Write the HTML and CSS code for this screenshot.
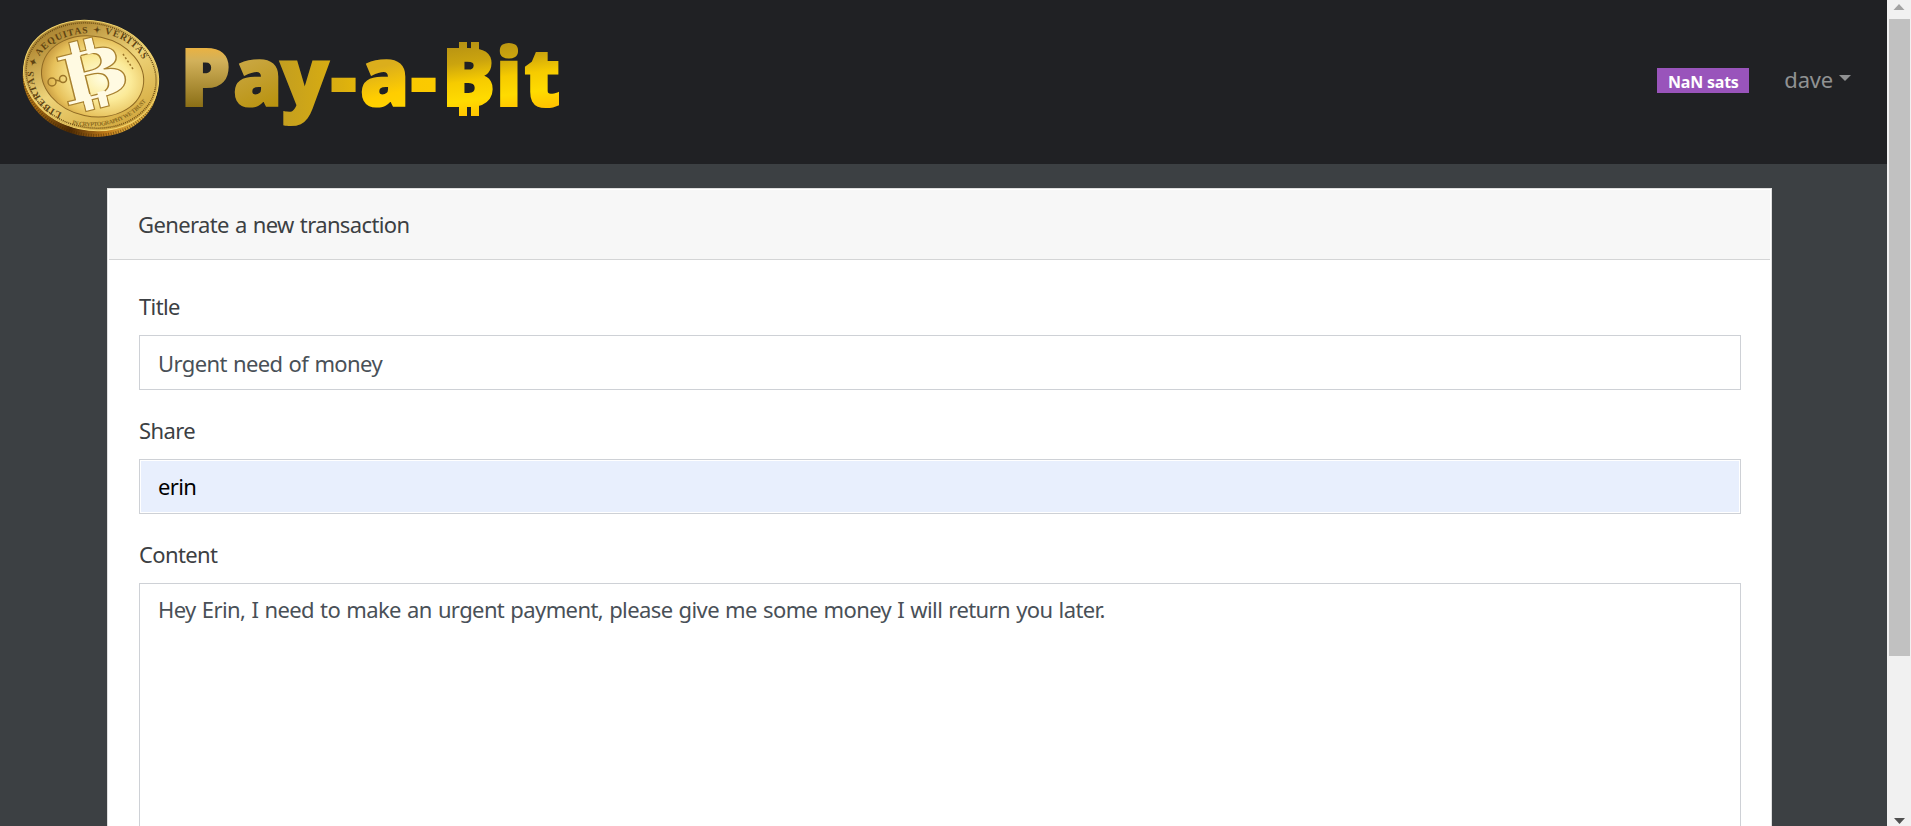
FILE: index.html
```
<!DOCTYPE html>
<html lang="en">
<head>
<meta charset="utf-8">
<title>Pay-a-Bit</title>
<link rel="stylesheet" href="styles.css">
</head>
<body>
<div class="page">
  <header class="navbar">
    <div class="brand">
      <svg class="coin" width="164" height="150" viewBox="0 0 164 150">
        <defs>
          <linearGradient id="edge" x1="0" y1="0" x2="1" y2="0.2">
            <stop offset="0" stop-color="#c99022"/><stop offset=".3" stop-color="#a86c14"/>
            <stop offset=".6" stop-color="#4d2a04"/><stop offset=".85" stop-color="#c07a18"/><stop offset="1" stop-color="#e0b040"/>
          </linearGradient>
          <linearGradient id="ring" x1="0" y1="0" x2="1" y2="1">
            <stop offset="0" stop-color="#8d6d28"/><stop offset=".22" stop-color="#b8913a"/>
            <stop offset=".5" stop-color="#eed47a"/><stop offset=".8" stop-color="#d9b148"/><stop offset="1" stop-color="#b3801f"/>
          </linearGradient>
          <radialGradient id="face" cx=".6" cy=".5" r=".62">
            <stop offset="0" stop-color="#fffde0"/><stop offset=".45" stop-color="#fbea98"/>
            <stop offset=".8" stop-color="#e6c05a"/><stop offset="1" stop-color="#c0923a"/>
          </radialGradient>
          <path id="legend" d="M62 113 C19 96 23 37 88 33 C129 31 154 60 145 89"/>
          <path id="motto" d="M72 124 C100 131 135 122 150 95"/>
        </defs>
        <ellipse cx="90.500" cy="80" rx="68" ry="56.500" transform="rotate(12 91 79)" fill="url(#edge)"/>
        <ellipse cx="90.500" cy="80" rx="66.500" ry="55" transform="rotate(12 91 79)" fill="none" stroke="#3f2504" stroke-opacity=".5" stroke-width="3" stroke-dasharray="1 1.500"/>
        <ellipse cx="91" cy="75.500" rx="68" ry="54.500" transform="rotate(12 91 76)" fill="url(#ring)" stroke="#f3d56c" stroke-width="1"/>
        <ellipse cx="91" cy="75.500" rx="65.500" ry="52" transform="rotate(12 91 76)" fill="none" stroke="#6a4c14" stroke-width="1.500" stroke-dasharray="1 1"/>
        <ellipse cx="92.500" cy="76.500" rx="51.500" ry="40" transform="rotate(12 93 77)" fill="url(#face)" stroke="#8f6a24" stroke-width="1"/>
        <text class="coin-legend"><textPath href="#legend" textLength="190">LIBERTAS ✦ AEQUITAS ✦ VERITAS</textPath></text>
        <text class="coin-motto"><textPath href="#motto" textLength="82">IN CRYPTOGRAPHY WE TRUST</textPath></text>
        <g fill="none" stroke="#9a7428" stroke-width="1.500">
          <circle cx="52" cy="82" r="4"/><circle cx="63" cy="79" r="3.500"/><path d="M55 80 L60 81"/>
          <path d="M123 54 L133 69" stroke-dasharray="2 2"/>
        </g>
        <g class="coin-mark" transform="translate(92 74) rotate(-14)">
          <path d="M-15 -36h9v14h-9zM0 -36h9v14h-9zM-15 22h9v13h-9zM0 22h9v13h-9z"/>
          <text class="coin-sign" x="-34" y="25" textLength="70" lengthAdjust="spacingAndGlyphs">B</text>
          <path stroke="none" d="M-14.400 -28h7.800v8h-7.800zM.6 -28h7.800v8h-7.800zM-14.400 19h7.800v9h-7.800zM.6 19h7.800v9h-7.800z"/>
        </g>
      </svg>
      <svg class="wordmark" width="400" height="120" viewBox="0 0 400 120">
        <defs>
          <linearGradient id="gold" gradientUnits="userSpaceOnUse" x1="10" y1="0" x2="385" y2="0">
            <stop offset="0" stop-color="#b08e34"/><stop offset=".25" stop-color="#c39e20"/>
            <stop offset=".42" stop-color="#dcb00e"/><stop offset=".57" stop-color="#fac800"/><stop offset="1" stop-color="#ffd200"/>
          </linearGradient>
          <linearGradient id="bit" gradientUnits="userSpaceOnUse" x1="300" y1="22" x2="310" y2="97">
            <stop offset="0" stop-color="#b89313"/><stop offset=".25" stop-color="#cba40e"/><stop offset=".5" stop-color="#f6cb00"/>
            <stop offset=".75" stop-color="#ffdb00"/><stop offset="1" stop-color="#ffc000"/>
          </linearGradient>
          <linearGradient id="lead" gradientUnits="userSpaceOnUse" x1="20" y1="29" x2="20" y2="87">
            <stop offset="0" stop-color="#e8b244"/><stop offset=".2" stop-color="#d2b15a"/><stop offset="1" stop-color="#8b6f16"/>
          </linearGradient>
          <linearGradient id="soft" gradientUnits="userSpaceOnUse" x1="70" y1="42" x2="90" y2="88">
            <stop offset="0" stop-color="#c9a640"/><stop offset="1" stop-color="#b99310"/>
          </linearGradient>
          <linearGradient id="mid" gradientUnits="userSpaceOnUse" x1="215" y1="44" x2="225" y2="84">
            <stop offset="0" stop-color="#dbae1c"/><stop offset=".7" stop-color="#ffcd00"/><stop offset="1" stop-color="#ffd200"/>
          </linearGradient>
        </defs>
        <path fill="url(#bit)" d="M283 22h8v10h-8zM295 22h8v10h-8zM283 84h8v12h-8zM295 84h8v12h-8z"/>
        <text class="wordmark-text" y="86"><tspan class="g-lead" x="4.500">P</tspan><tspan class="g-soft" x="57">a</tspan><tspan x="104.500">y</tspan><tspan x="155">-</tspan><tspan class="g-mid" x="184">a</tspan><tspan x="235">-</tspan><tspan class="g-bit" x="266">B</tspan><tspan class="g-bit" x="320">i</tspan><tspan class="g-bit" x="348">t</tspan></text>
      </svg>
    </div>
    <nav class="account">
      <span class="badge">NaN sats</span>
      <a class="user">dave<i class="caret"></i></a>
    </nav>
  </header>
  <main class="card">
    <div class="card-header">Generate a new transaction</div>
    <div class="card-body">
      <div class="label">Title</div>
      <div class="input">Urgent need of money</div>
      <div class="label">Share</div>
      <div class="input autofill">erin</div>
      <div class="label">Content</div>
      <div class="input textarea">Hey Erin, I need to make an urgent payment, please give me some money I will return you later.</div>
    </div>
  </main>
</div>
<aside class="scrollbar">
  <svg class="up" width="24" height="19" viewBox="0 0 24 19"><path d="M6.500 10 L12 4 L17.500 10Z" fill="#a3a3a3"/></svg>
  <div class="thumb"></div>
  <svg class="down" width="24" height="9" viewBox="0 0 24 9"><path d="M7 1 H18 L12.500 7Z" fill="#505050"/></svg>
</aside>
</body>
</html>
```
FILE: styles.css
```
* { box-sizing: border-box; }
body {
  margin: 0;
  height: 826px;
  display: flex;
  overflow: hidden;
  background: #3c4043;
  color: #3c4043;
  font: 22px/32px "Noto Sans", "Open Sans", sans-serif;
  letter-spacing: -0.62px;
  word-spacing: 1px;
  white-space: nowrap;
}
.page { flex: 1; height: 826px; overflow: hidden; }
.navbar {
  height: 164px;
  background: #202124;
  display: flex;
  justify-content: space-between;
}
.brand { display: flex; letter-spacing: 0; word-spacing: 0; }
.coin { display: block; }
.wordmark { display: block; margin: 20px 0 0 12px; }
.coin-legend { font: bold 9.5px "Liberation Serif", serif; fill: #5f4412; }
.coin-motto { font: bold 6px "Liberation Serif", serif; fill: #8a6a20; }
.coin-mark { fill: #fffae2; stroke: #a8812f; stroke-width: 1.2px; }
.coin-sign { font: bold 68px "DejaVu Serif", serif; }
.wordmark-text {
  font: 800 79px "Open Sans", "Noto Sans", sans-serif;
  fill: url(#gold);
  stroke: url(#gold);
  stroke-width: 2.2px;
}
.g-lead { fill: url(#lead); stroke: url(#lead); }
.g-soft { fill: url(#soft); stroke: url(#soft); }
.g-mid { fill: url(#mid); stroke: url(#mid); }
.g-bit { fill: url(#bit); stroke: url(#bit); }
.account { display: flex; padding: 63px 36px 0 0; }
.badge {
  width: 92px;
  height: 25px;
  margin: 5px 35px 0 0;
  background: #9954bb;
  color: #fff;
  font-weight: 700;
  font-size: 16px;
  line-height: 28px;
  text-align: center;
  letter-spacing: -0.2px;
  word-spacing: 0;
}
.user { display: flex; color: #909192; letter-spacing: -0.2px; }
.caret {
  margin: 12px 0 0 6px;
  width: 0;
  height: 0;
  border: 6.5px solid transparent;
  border-top-color: #909192;
  border-bottom: 0;
}
.card {
  margin: 24px 115px 0 107px;
  height: 900px;
  background: #fff;
  border: 1px solid #dedede;
}
.card-header {
  height: 70px;
  margin: 1px 1px 0;
  padding: 18px 29px 0;
  background: #f7f7f7;
  border-bottom: 1px solid #d4d5d6;
}
.card-body { padding: 30px 30px 0 31px; }
.label { height: 45px; }
.input {
  height: 55px;
  margin-bottom: 24px;
  padding: 11px 18px;
  border: 1px solid #ced1d6;
  background: #fff;
  color: #495057;
  letter-spacing: -0.6px;
}
.autofill { color: #000; background: #e8effd; box-shadow: inset 0 0 0 1px #fff; padding-top: 10px; }
.textarea { height: 400px; padding-top: 9px; }
.scrollbar {
  width: 24px;
  height: 826px;
  background: #f1f1f1;
  display: flex;
  flex-direction: column;
}
.thumb { height: 637px; margin: 0 1px 0 2px; background: #c1c1c1; }
.down { margin-top: auto; }
```
